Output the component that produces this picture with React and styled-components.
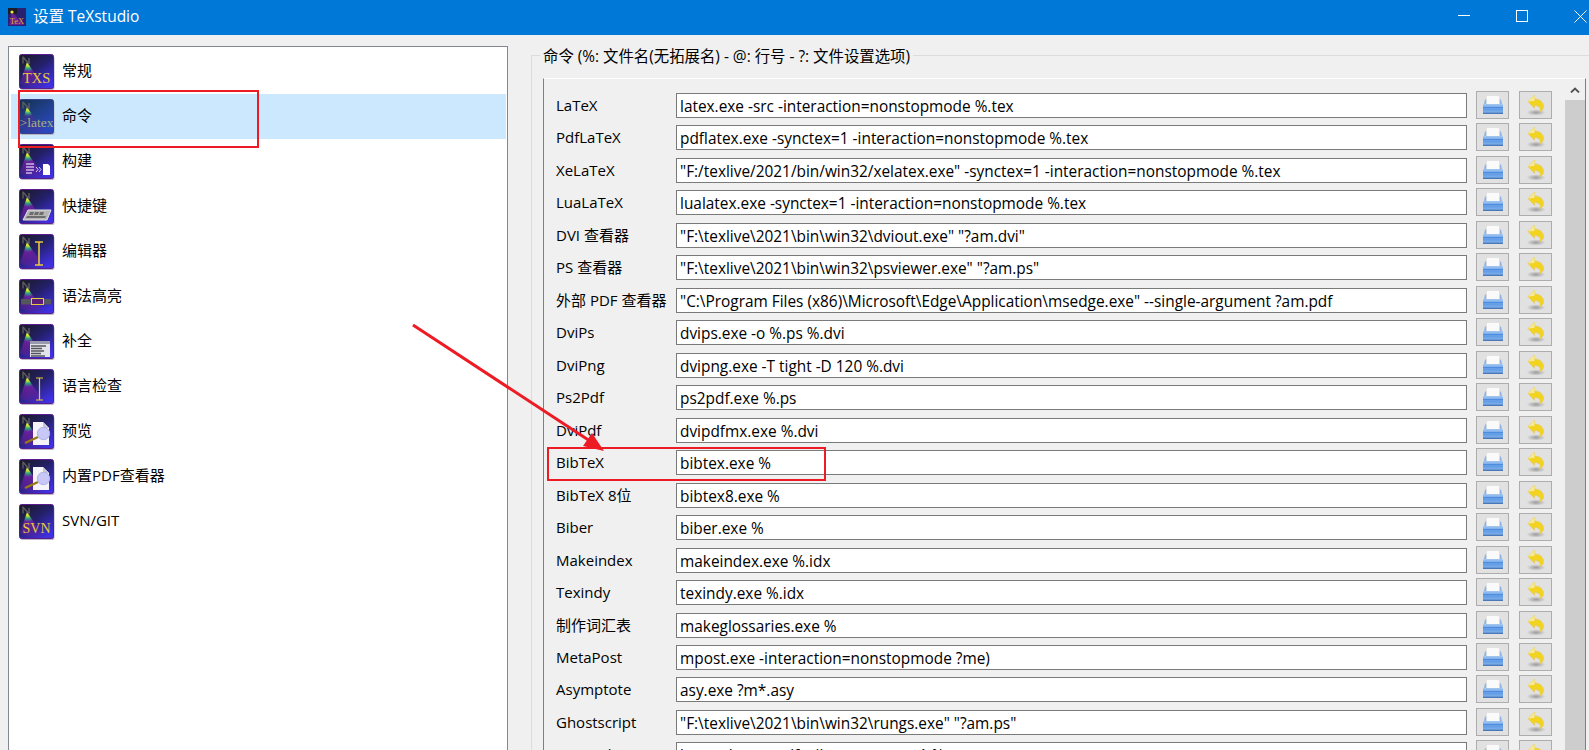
import React from "react";
import styled, { createGlobalStyle } from "styled-components";

const GlobalStyle = createGlobalStyle`
  html, body { margin: 0; padding: 0; background: #f0f0f0; overflow: hidden; }
  body { font-family: "Open Sans", "Noto Sans CJK SC", sans-serif; color: #000; }
`;

const Win = styled.div`
  position: relative;
  width: 1589px;
  height: 750px;
  overflow: hidden;
  background: #f0f0f0;
  display: flex;
  flex-direction: column;
`;

const TitleBar = styled.div`
  height: 35px;
  flex: none;
  background: #0078d7;
  color: #fff;
  display: flex;
  align-items: center;
  padding-left: 8px;
  font-size: 15.5px;
  gap: 7px;
`;

const TitleText = styled.span`
  flex: 1;
  padding-bottom: 4px;
`;

const WinControls = styled.div`
  display: flex;
  margin-right: -20px;
`;

const WinBtn = styled.div`
  width: 58px;
  height: 35px;
  padding-bottom: 3px;
  box-sizing: border-box;
  display: flex;
  align-items: center;
  justify-content: center;
`;

const Body = styled.div`
  flex: 1;
  min-height: 0;
  display: flex;
  padding: 11px 0 0 8px;
`;

const SideList = styled.div`
  width: 500px;
  flex: none;
  box-sizing: border-box;
  background: #fff;
  border: 1px solid #828790;
  padding: 2px 1px 2px 2px;
  margin-bottom: -20px;
`;

const SideItem = styled.div`
  height: 45px;
  display: flex;
  align-items: center;
  gap: 7px;
  padding-left: 8px;
  font-size: 15px;
  background: ${(p) => (p.$active ? "#cce8ff" : "transparent")};
`;

const SideText = styled.span`
  padding-bottom: 4px;
`;

const GroupBox = styled.div`
  position: relative;
  flex: 1;
  margin: 9px 0 -20px 23px;
  border-top: 1px solid #dcdcdc;
  border-left: 1px solid #dcdcdc;
  padding: 22px 3px 0 11px;
  display: flex;
  min-width: 0;
`;

const GroupTitle = styled.div`
  position: absolute;
  top: -9px;
  left: 8px;
  padding: 0 3px;
  background: #f0f0f0;
  font-size: 15.4px;
  line-height: 20px;
`;

const ScrollArea = styled.div`
  flex: 1;
  min-width: 0;
  display: flex;
  border-top: 1px solid #fff;
  border-left: 1px solid #7f7f7f;
  border-right: 1px solid #7f7f7f;
`;

const Rows = styled.div`
  flex: 1;
  min-width: 0;
  padding: 12px 12px 0 12px;
  display: grid;
  grid-auto-rows: 32.47px;
  align-content: start;
`;

const Row = styled.div`
  display: grid;
  grid-template-columns: 120px 791px auto auto;
  align-items: start;
  height: 28px;
`;

const Label = styled.div`
  margin-top: 2px;
  font-size: 15px;
  line-height: 25px;
  white-space: nowrap;
`;

const Field = styled.div`
  box-sizing: border-box;
  height: 25px;
  margin-top: 2px;
  background: #fff;
  border: 1px solid #7a7a7a;
  padding-left: 3px;
  font-size: 15.4px;
  line-height: 25px;
  white-space: nowrap;
  overflow: hidden;
`;

const ToolBtn = styled.div`
  box-sizing: border-box;
  width: 33px;
  height: 28px;
  margin-left: 9px;
  background: #e1e1e1;
  border: 1px solid #adadad;
  display: flex;
  align-items: center;
  justify-content: center;
`;

const ScrollBar = styled.div`
  width: 20px;
  flex: none;
  background: #cdcdcd;
  display: flex;
  flex-direction: column;
`;

const ScrollUp = styled.div`
  height: 21px;
  background: #f0f0f0;
  display: flex;
  align-items: center;
  justify-content: center;
`;

// red annotations drawn on top of the screenshot
const Mark = styled.div`
  position: absolute;
  box-sizing: border-box;
  border: 2px solid #ed1c24;
  left: ${(p) => p.$x}px;
  top: ${(p) => p.$y}px;
  width: ${(p) => p.$w}px;
  height: ${(p) => p.$h}px;
`;

const ArrowLayer = styled.svg`
  position: absolute;
  left: 0;
  top: 0;
  pointer-events: none;
`;

const sideItems = [
  ["txs", "常规"],
  ["latex", "命令"],
  ["build", "构建"],
  ["keys", "快捷键"],
  ["editor", "编辑器"],
  ["syntax", "语法高亮"],
  ["complete", "补全"],
  ["spell", "语言检查"],
  ["preview", "预览"],
  ["preview", "内置PDF查看器"],
  ["svn", "SVN/GIT"],
];

const commands = [
  ["LaTeX", "latex.exe -src -interaction=nonstopmode %.tex"],
  ["PdfLaTeX", "pdflatex.exe -synctex=1 -interaction=nonstopmode %.tex"],
  ["XeLaTeX", '"F:/texlive/2021/bin/win32/xelatex.exe" -synctex=1 -interaction=nonstopmode %.tex'],
  ["LuaLaTeX", "lualatex.exe -synctex=1 -interaction=nonstopmode %.tex"],
  ["DVI 查看器", '"F:\\texlive\\2021\\bin\\win32\\dviout.exe" "?am.dvi"'],
  ["PS 查看器", '"F:\\texlive\\2021\\bin\\win32\\psviewer.exe" "?am.ps"'],
  ["外部 PDF 查看器", '"C:\\Program Files (x86)\\Microsoft\\Edge\\Application\\msedge.exe" --single-argument ?am.pdf'],
  ["DviPs", "dvips.exe -o %.ps %.dvi"],
  ["DviPng", "dvipng.exe -T tight -D 120 %.dvi"],
  ["Ps2Pdf", "ps2pdf.exe %.ps"],
  ["DviPdf", "dvipdfmx.exe %.dvi"],
  ["BibTeX", "bibtex.exe %"],
  ["BibTeX 8位", "bibtex8.exe %"],
  ["Biber", "biber.exe %"],
  ["Makeindex", "makeindex.exe %.idx"],
  ["Texindy", "texindy.exe %.idx"],
  ["制作词汇表", "makeglossaries.exe %"],
  ["MetaPost", "mpost.exe -interaction=nonstopmode ?me)"],
  ["Asymptote", "asy.exe ?m*.asy"],
  ["Ghostscript", '"F:\\texlive\\2021\\bin\\win32\\rungs.exe" "?am.ps"'],
  ["Latexmk", "latexmk.exe -pdf -silent -synctex=1 %"],
];

const IconArt = ({ kind }) => {
  const gold = "#e8c93a";
  switch (kind) {
    case "txs":
      return <text x="17.5" y="29" textAnchor="middle" fontFamily="Liberation Serif" fontSize="14.5" fill={gold}>TXS</text>;
    case "svn":
      return <text x="17.5" y="29" textAnchor="middle" fontFamily="Liberation Serif" fontSize="14" fill={gold}>SVN</text>;
    case "latex":
      return <text x="17.5" y="28" textAnchor="middle" fontFamily="Liberation Serif" fontSize="13.5" fill="#a8b078">{">latex"}</text>;
    case "build":
      return (
        <g>
          <path d="M7 20h8M7 23h8M7 26h8M7 29h6" stroke="#c9b5e8" strokeWidth="1.6" />
          <path d="M17 23l2 2.5-2 2.5M20 23l2 2.5-2 2.5" stroke="#d8c8f0" fill="none" />
          <path d="M24 20h5l2 2v9h-7z" fill="#fff" />
        </g>
      );
    case "keys":
      return (
        <g>
          <path d="M9 21h23l-4 10H4z" fill="#b5b5b5" stroke="#e0e0e0" />
          <path d="M11 23h4l-1 3h-4zM16 23h4l-1 3h-4zM21 23h4l-1 3h-4zM8 27h19l-1 2H7z" fill="#6d6d6d" />
        </g>
      );
    case "editor":
      return <path d="M16 8h8M20 8v23M16 31h8" stroke={gold} strokeWidth="1.6" fill="none" />;
    case "spell":
      return <path d="M17 9h7M20.5 9v22M17 31h7" stroke={gold} strokeWidth="1.2" fill="none" />;
    case "syntax":
      return (
        <g>
          <rect x="2" y="20" width="30" height="5.5" fill="#56565f" />
          <rect x="12.5" y="19.5" width="12" height="6" fill="#5b1c78" stroke={gold} strokeWidth="1" />
        </g>
      );
    case "complete":
      return (
        <g>
          <rect x="11" y="17" width="20" height="16" fill="#e2e2ea" />
          <rect x="11" y="17" width="20" height="3" fill="#9a9aae" />
          <path d="M12 22h15M12 24.5h11M12 27h13M12 29.5h10M12 32h14" stroke="#55555f" strokeWidth="1.3" />
        </g>
      );
    case "preview":
      return (
        <g>
          <path d="M14 8h10l6 6v17H14z" fill="#f4f4fa" />
          <path d="M24 8v6h6" fill="#c8c8d4" />
          <path d="M6 29l13-6" stroke="#9a7a10" strokeWidth="2.4" />
          <circle cx="24.5" cy="19.5" r="6.2" fill="#c8c8f8" stroke="#b0b0e8" />
        </g>
      );
    default:
      return null;
  }
};

const ItemIcon = ({ kind }) => {
  const dim = kind === "latex";
  return (
    <svg width="36" height="36" viewBox="0 0 36 36" style={{ flex: "none" }}>
      <defs>
        <linearGradient id={`bg-${kind}`} x1="0" y1="0" x2="0.7" y2="1">
          <stop offset="0" stopColor={dim ? "#14304e" : "#1a1a22"} />
          <stop offset="0.5" stopColor={dim ? "#1f3f88" : "#24206a"} />
          <stop offset="1" stopColor={dim ? "#2c48c0" : "#3f30e0"} />
        </linearGradient>
        <radialGradient id={`cone-${kind}`} gradientUnits="userSpaceOnUse" cx="9" cy="9" r="25">
          <stop offset="0" stopColor="#ffff30" />
          <stop offset="0.12" stopColor="#c0e030" />
          <stop offset="0.22" stopColor="#30a080" />
          <stop offset="0.36" stopColor="#6a20a0" stopOpacity={dim ? 0.35 : 0.95} />
          <stop offset="1" stopColor="#7a1fa0" stopOpacity="0.15" />
        </radialGradient>
      </defs>
      <rect x="1.5" y="2" width="34" height="34" rx="2" fill="#b8b8c0" />
      <rect x="0.5" y="0.5" width="34" height="34" rx="2" fill={`url(#bg-${kind})`} stroke={dim ? "#3a4090" : "#5c1c90"} />
      <path d="M8 8L1 29c6 4 16 5 24 4z" fill={`url(#cone-${kind})`} />
      <path d="M4 2.5v7M4 3l6 7M10 4v6" stroke="#5c5c5c" strokeWidth="1.4" fill="none" />
      <IconArt kind={kind} />
    </svg>
  );
};

const PrintIcon = () => (
  <svg width="22" height="20" viewBox="0 0 22 20">
    <defs>
      <linearGradient id="printBody" x1="0" y1="0" x2="0" y2="1">
        <stop offset="0" stopColor="#a6c8f0" />
        <stop offset="0.5" stopColor="#5f9be6" />
        <stop offset="1" stopColor="#8cb8ec" />
      </linearGradient>
    </defs>
    <path d="M3 4.5h16l1 4.5H2z" fill="#8fb4e4" />
    <rect x="4.5" y="0.5" width="13" height="10" fill="#fafafa" stroke="#dcdcdc" strokeWidth="0.6" />
    <rect x="1" y="9" width="20" height="10" rx="1" fill="url(#printBody)" />
    <rect x="1" y="17.6" width="20" height="1.4" fill="#4a78b8" />
    <path d="M1 12.5h20" stroke="#4f8be0" />
  </svg>
);

const UndoIcon = () => (
  <svg width="20" height="22" viewBox="0 0 20 22">
    <defs>
      <radialGradient id="undoShadow">
        <stop offset="0" stopColor="#8a8a8a" stopOpacity="0.8" />
        <stop offset="1" stopColor="#8a8a8a" stopOpacity="0" />
      </radialGradient>
    </defs>
    <ellipse cx="10" cy="18.5" rx="9.5" ry="3.2" fill="url(#undoShadow)" />
    <path d="M2 7.5L8.5 1v4c5 0 9 3 9 7.5 0 2.5-1.500 4.500-4 5.500 1.200-2 1-4-.5-5.200-1-.8-2.500-1.300-4.500-1.300v3z" fill="#f2d320" stroke="#e0c860" strokeWidth="0.6" />
    <path d="M2 7.5L8.5 1v6z" fill="#f6e89a" />
  </svg>
);

export default function App() {
  return (
    <Win>
      <GlobalStyle />
      <TitleBar>
        <svg width="18" height="18" viewBox="0 0 18 18" style={{ marginBottom: 1 }}>
          <rect width="18" height="18" fill="#2a2070" />
          <path d="M0 0h9v6H0z" fill="#1c1c28" />
          <path d="M4 4L1 17h15z" fill="#6a2090" />
          <circle cx="4" cy="4" r="1.6" fill="#e8e840" />
          <text x="9" y="15.5" textAnchor="middle" fontFamily="Liberation Serif" fontSize="8.5" fill="#e0a040">TeX</text>
        </svg>
        <TitleText>设置 TeXstudio</TitleText>
        <WinControls>
          <WinBtn>
            <svg width="12" height="12"><path d="M0 5.5h12" stroke="#fff" /></svg>
          </WinBtn>
          <WinBtn>
            <svg width="12" height="12"><rect x="0.5" y="0.5" width="11" height="11" fill="none" stroke="#fff" /></svg>
          </WinBtn>
          <WinBtn>
            <svg width="13" height="13"><path d="M0.5 0.5l12 12M12.5 0.5l-12 12" stroke="#fff" /></svg>
          </WinBtn>
        </WinControls>
      </TitleBar>
      <Body>
        <SideList>
          {sideItems.map(([kind, text], i) => (
            <SideItem key={text} $active={i === 1}>
              <ItemIcon kind={kind} />
              <SideText>{text}</SideText>
            </SideItem>
          ))}
        </SideList>
        <GroupBox>
          <GroupTitle>命令 (%: 文件名(无拓展名) - @: 行号 - ?: 文件设置选项)</GroupTitle>
          <ScrollArea>
            <Rows>
              {commands.map(([label, value]) => (
                <Row key={label}>
                  <Label>{label}</Label>
                  <Field>{value}</Field>
                  <ToolBtn><PrintIcon /></ToolBtn>
                  <ToolBtn><UndoIcon /></ToolBtn>
                </Row>
              ))}
            </Rows>
            <ScrollBar>
              <ScrollUp>
                <svg width="10" height="6"><path d="M1 5.5l4-4 4 4" fill="none" stroke="#505050" strokeWidth="1.8" /></svg>
              </ScrollUp>
            </ScrollBar>
          </ScrollArea>
        </GroupBox>
      </Body>
      <Mark $x={18} $y={90} $w={241} $h={58} />
      <Mark $x={547} $y={447} $w={279} $h={34} />
      <ArrowLayer width="1589" height="750" viewBox="0 0 1589 750">
        <path d="M413 325L593 443" stroke="#ed1c24" strokeWidth="3" />
        <path d="M604 451L583 446L592 433z" fill="#ed1c24" />
      </ArrowLayer>
    </Win>
  );
}
